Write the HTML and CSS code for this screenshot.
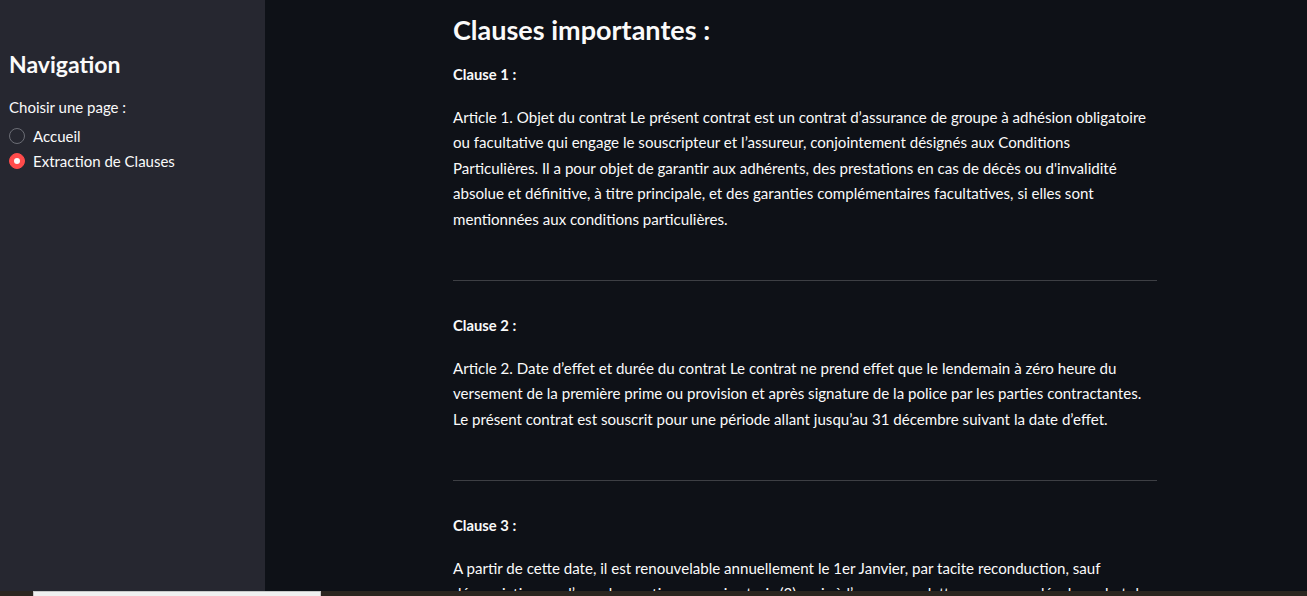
FILE: index.html
```html
<!DOCTYPE html>
<html lang="fr">
<head>
<meta charset="utf-8">
<title>Extraction de Clauses</title>
<link rel="stylesheet" href="styles.css">
</head>
<body>
<div class="app">
  <aside class="sidebar">
    <h2 class="side-title">Navigation</h2>
    <div class="radio-label">Choisir une page :</div>
    <div class="radio-group">
      <label class="radio-row"><span class="radio"></span><span>Accueil</span></label>
      <label class="radio-row"><span class="radio checked"></span><span>Extraction de Clauses</span></label>
    </div>
  </aside>
  <main class="main">
    <div class="block">
      <h3 class="title">Clauses importantes :</h3>

      <div class="clause-label">Clause 1 :</div>
      <p class="clause-text">Article 1. Objet du contrat Le présent contrat est un contrat d’assurance de groupe à adhésion obligatoire ou facultative qui engage le souscripteur et l’assureur, conjointement désignés aux Conditions Particulières. Il a pour objet de garantir aux adhérents, des prestations en cas de décès ou d'invalidité absolue et définitive, à titre principale, et des garanties complémentaires facultatives, si elles sont mentionnées aux conditions particulières.</p>
      <hr class="sep">

      <div class="clause-label">Clause 2 :</div>
      <p class="clause-text">Article 2. Date d’effet et durée du contrat Le contrat ne prend effet que le lendemain à zéro heure du versement de la première prime ou provision et après signature de la police par les parties contractantes. Le présent contrat est souscrit pour une période allant jusqu’au 31 décembre suivant la date d’effet.</p>
      <hr class="sep">

      <div class="clause-label">Clause 3 :</div>
      <p class="clause-text">A partir de cette date, il est renouvelable annuellement le 1er Janvier, par tacite reconduction, sauf dénonciation par l’une des parties, au moins trois (3) mois à l’avance par lettre recommandée, le cachet de la poste faisant foi.</p>
    </div>
  </main>
</div>
<div class="bottom-bar"><div class="bottom-box"></div></div>
</body>
</html>
```
FILE: styles.css
```css
* { box-sizing: border-box; }
html, body {
  margin: 0;
  height: 100%;
  overflow: hidden;
  background: #0e1117;
  font-family: "Lato", "Open Sans", sans-serif;
  color: #fafafa;
}
.app {
  display: flex;
  height: 596px;
}
.sidebar {
  width: 265px;
  flex: 0 0 265px;
  background: #262730;
  padding: 48px 9px 0 9px;
}
.side-title {
  margin: 0;
  font-size: 23px;
  line-height: 32px;
  font-weight: 700;
}
.radio-label {
  margin-top: 17px;
  font-size: 15px;
  line-height: 20px;
}
.radio-group {
  margin-top: 8px;
  display: flex;
  flex-direction: column;
  gap: 3px;
}
.radio-row {
  display: flex;
  align-items: center;
  gap: 8px;
  font-size: 15px;
  line-height: 22px;
}
.radio {
  width: 16px;
  height: 16px;
  border-radius: 50%;
  border: 1px solid #6b6d75;
  display: inline-block;
}
.radio.checked {
  background: #ff4b4b;
  border-color: #ff4b4b;
  position: relative;
}
.radio.checked::after {
  content: "";
  position: absolute;
  left: 4px;
  top: 4px;
  width: 6px;
  height: 6px;
  border-radius: 50%;
  background: #fafafa;
}
.main {
  flex: 1;
  padding-left: 188px;
  padding-top: 13px;
}
.block {
  width: 704px;
}
.title {
  margin: 0;
  font-size: 27px;
  line-height: 34px;
  font-weight: 700;
}
.clause-label {
  margin-top: 17px;
  font-size: 14.8px;
  line-height: 21px;
  font-weight: 700;
}
.clause-text {
  margin: 19.5px 0 0 0;
  font-size: 15.1px;
  line-height: 25.5px;
}
.sep {
  margin: 47.5px 0 0 0;
  border: 0;
  height: 1px;
  background: rgba(250, 250, 250, 0.2);
}
.sep + .clause-label {
  margin-top: 34.5px;
}
.bottom-bar {
  position: fixed;
  left: 0;
  right: 0;
  bottom: 0;
  height: 5px;
  background: #2b2620;
}
.bottom-box {
  margin-left: 33px;
  width: 288px;
  height: 5px;
  background: #f0f0f0;
  border: 1px solid #c8c8c8;
  border-bottom: 0;
}
```
